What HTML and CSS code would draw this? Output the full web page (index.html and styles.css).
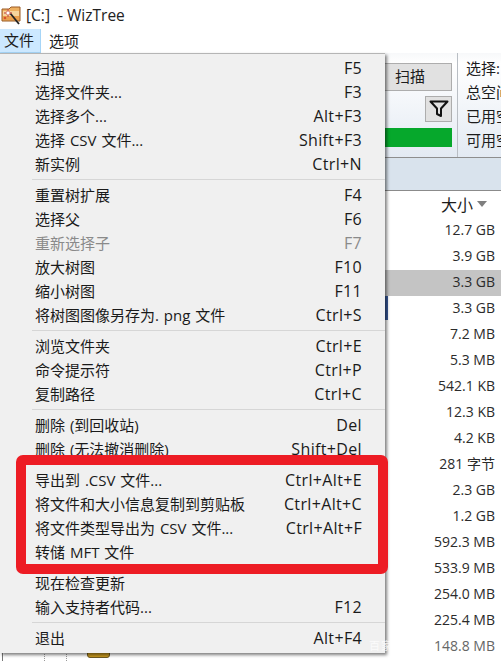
FILE: index.html
```html
<!DOCTYPE html>
<html lang="zh-CN">
<head>
<meta charset="utf-8">
<title>WizTree</title>
<link rel="stylesheet" href="styles.css">
</head>
<body>
<div class="window">
  <header class="titlebar">
    <svg class="app-icon" width="22" height="22" viewBox="0 0 22 22">
      <path d="M1 5h7l2-2h9v14H1z" fill="#eeb060" stroke="#9a5a24"/>
      <path d="M2 7h16v9H2z" fill="#f6d49c"/>
      <path d="M2 12h16v4H2z" fill="#eba04e"/>
      <path d="M9 9l9 11" stroke="#222" stroke-width="1.800"/>
      <path d="M7 5l1 3 3 1-3 1-1 3-1-3-3-1 3-1z" fill="#fff" stroke="#c0392b" stroke-width=".6"/>
      <circle cx="4" cy="14" r="1.300" fill="#d9502e"/>
    </svg>
    <span class="title-text">[C:]&nbsp; - WizTree</span>
  </header>
  <nav class="menubar">
    <span class="menubar-item is-open">文件</span>
    <span class="menubar-item">选项</span>
  </nav>
  <section class="toolbar">
    <div class="toolbar-spacer"></div>
    <div class="scan-panel">
      <button class="scan-btn">扫描</button>
      <div class="filter-row">
        <span class="filter-btn">
          <svg width="20" height="20" viewBox="0 0 20 20"><path d="M1.500 2.500h17l-6.500 7v7.500l-4-2v-5.500z" fill="none" stroke="#111" stroke-width="2" stroke-linejoin="round"/></svg>
        </span>
      </div>
      <div class="usage-bar"></div>
    </div>
    <div class="info-panel">
      <div>选择:</div>
      <div>总空间</div>
      <div>已用空</div>
      <div>可用空</div>
    </div>
  </section>
  <div class="band"></div>
  <section class="list">
    <div class="list-head"><span>大小</span><i class="sort-arrow"></i></div>
    <div class="list-row">12.7 GB</div>
    <div class="list-row">3.9 GB</div>
    <div class="list-row is-selected">3.3 GB</div>
    <div class="list-row is-marked">3.3 GB</div>
    <div class="list-row">7.2 MB</div>
    <div class="list-row">5.3 MB</div>
    <div class="list-row">542.1 KB</div>
    <div class="list-row">12.3 KB</div>
    <div class="list-row">4.2 KB</div>
    <div class="list-row">281 字节</div>
    <div class="list-row">2.3 GB</div>
    <div class="list-row">1.2 GB</div>
    <div class="list-row">592.3 MB</div>
    <div class="list-row">533.9 MB</div>
    <div class="list-row">254.0 MB</div>
    <div class="list-row">225.4 MB</div>
    <div class="list-row">148.8 MB</div>
  </section>
  <div class="tree-bits">
    <i class="tree-line one"></i><i class="tree-line two"></i><i class="tree-line three"></i><i class="folder-tip"></i>
  </div>

  <div class="menu">
    <div class="item"><span>扫描</span><span>F5</span></div>
    <div class="item"><span>选择文件夹...</span><span>F3</span></div>
    <div class="item"><span>选择多个...</span><span>Alt+F3</span></div>
    <div class="item"><span>选择 CSV 文件...</span><span>Shift+F3</span></div>
    <div class="item"><span>新实例</span><span>Ctrl+N</span></div>
    <div class="sep"></div>
    <div class="item"><span>重置树扩展</span><span>F4</span></div>
    <div class="item"><span>选择父</span><span>F6</span></div>
    <div class="item is-disabled"><span>重新选择子</span><span>F7</span></div>
    <div class="item"><span>放大树图</span><span>F10</span></div>
    <div class="item"><span>缩小树图</span><span>F11</span></div>
    <div class="item"><span>将树图图像另存为. png 文件</span><span>Ctrl+S</span></div>
    <div class="sep"></div>
    <div class="item"><span>浏览文件夹</span><span>Ctrl+E</span></div>
    <div class="item"><span>命令提示符</span><span>Ctrl+P</span></div>
    <div class="item"><span>复制路径</span><span>Ctrl+C</span></div>
    <div class="sep"></div>
    <div class="item"><span>删除 (到回收站)</span><span>Del</span></div>
    <div class="item"><span>删除 (无法撤消删除)</span><span>Shift+Del</span></div>
    <div class="sep"></div>
    <div class="item"><span>导出到 .CSV 文件...</span><span>Ctrl+Alt+E</span></div>
    <div class="item"><span>将文件和大小信息复制到剪贴板</span><span>Ctrl+Alt+C</span></div>
    <div class="item"><span>将文件类型导出为 CSV 文件...</span><span>Ctrl+Alt+F</span></div>
    <div class="item"><span>转储 MFT 文件</span><span></span></div>
    <div class="sep"></div>
    <div class="item"><span>现在检查更新</span><span></span></div>
    <div class="item"><span>输入支持者代码...</span><span>F12</span></div>
    <div class="sep"></div>
    <div class="item"><span>退出</span><span>Alt+F4</span></div>
  </div>
  <div class="highlight"></div>
  <span class="watermark">百家</span>
</div>
</body>
</html>
```
FILE: styles.css
```css
* { box-sizing: border-box; }
html, body { margin: 0; padding: 0; background: #fff; }
body {
  font-family: "Open Sans", "Noto Sans CJK SC", "Noto Sans", sans-serif;
  font-size: 15px;
  color: #1c1c1c;
}
.window {
  position: relative;
  width: 501px;
  height: 661px;
  overflow: hidden;
  background: #fff;
}
.titlebar {
  height: 29px;
  display: flex;
  align-items: center;
  gap: 3px;
  padding-left: 1px;
}
.app-icon { flex: none; }
.title-text { font-size: 15.500px; color: #222; }
.menubar {
  height: 24px;
  display: flex;
  align-items: stretch;
}
.menubar-item {
  display: flex;
  align-items: center;
  padding: 0 4px 2px;
  margin-right: 4px;
}
.menubar-item.is-open {
  width: 41px;
  background: #cce8ff;
  border: 1px solid #a6d5f7;
  border-left: 0;
  border-top: 0;
}
.toolbar {
  height: 105px;
  display: flex;
  background: linear-gradient(#f7f8fa, #ffffff 10%, #e3eaf3 100%);
  border-bottom: 1px solid #8e8e8e;
}
.toolbar-spacer { width: 385px; flex: none; }
.scan-panel {
  width: 73px;
  flex: none;
  border-right: 1px solid #b9bec4;
  padding-top: 10px;
}
.scan-btn {
  display: block;
  width: 67px;
  height: 28px;
  padding: 0 16px 3px 0;
  background: #e1e1e1;
  border: 1px solid #adadad;
  border-left: 0;
  font: inherit;
  font-size: 15px;
  color: #1c1c1c;
}
.filter-row {
  display: flex;
  padding: 5px 0 0 40px;
}
.filter-btn {
  width: 27px;
  height: 26px;
  display: flex;
  align-items: center;
  justify-content: center;
  background: #e1e1e1;
  border: 1px solid #adadad;
}
.usage-bar {
  width: 67px;
  height: 19px;
  margin-top: 6px;
  background: #06a82c;
}
.info-panel {
  padding: 3px 0 0 8px;
  line-height: 24px;
  white-space: nowrap;
  overflow: hidden;
}
.band {
  height: 33px;
  background: #d9e3ed;
  border-bottom: 1px solid #8b8b8b;
}
.list { padding: 1px 0 0; }
.list-head {
  height: 26px;
  display: flex;
  align-items: center;
  justify-content: flex-end;
  gap: 4px;
  padding: 0 14px 2px 0;
  font-size: 16px;
}
.sort-arrow {
  width: 0;
  height: 0;
  border-left: 5.500px solid transparent;
  border-right: 5.500px solid transparent;
  border-top: 6px solid #7f7f7f;
}
.list-row {
  height: 26px;
  padding: 0 6px 2px 0;
  line-height: 24px;
  text-align: right;
  font-size: 14px;
  color: #2b2b2b;
  position: relative;
}
.list-row.is-selected { background: #c4c4c4; }
.list-row.is-marked::before {
  content: "";
  position: absolute;
  left: 385px;
  top: 0;
  width: 3px;
  height: 24px;
  background: #3a5a9a;
}
.list-row:last-child { color: #666; }
.tree-bits { position: absolute; inset: 0; pointer-events: none; }
.tree-line {
  position: absolute;
  top: 652px;
  height: 9px;
  width: 0;
}
.tree-line.one { left: 2px; border-left: 1px solid #777; }
.tree-line.two { left: 44px; border-left: 1px dotted #999; }
.tree-line.three { left: 66px; border-left: 1px dotted #999; }
.folder-tip {
  position: absolute;
  left: 87px;
  top: 648px;
  width: 23px;
  height: 10px;
  background: #c8991f;
  border: 1px solid #6e5a22;
  border-radius: 0 0 3px 3px;
}
.menu {
  position: absolute;
  left: 0;
  top: 53px;
  width: 385px;
  height: 600px;
  padding: 2px 0 3px;
  background: #f0f0f0;
  border-top: 1px solid #b5b5b5;
  box-shadow: 2px 2px 3px rgba(0, 0, 0, .5);
}
.item {
  height: 24px;
  display: flex;
  align-items: center;
  justify-content: space-between;
  padding: 0 23px 2px 35px;
  white-space: nowrap;
  word-spacing: 1px;
  color: #1a1a1a;
}
.item span:last-child {
  margin-top: 2px;
  font-size: 16px;
  letter-spacing: .35px;
}
.item span:first-child {
  margin-top: 0;
  font-size: 15px;
  letter-spacing: 0;
}
.item.is-disabled { color: #8a8a8a; }
.sep {
  height: 7px;
  margin-left: 32px;
  background: linear-gradient(#d6d6d6, #d6d6d6) center / 100% 1px no-repeat;
}
.highlight {
  position: absolute;
  left: 16px;
  top: 455px;
  width: 372px;
  height: 119px;
  border: 10px solid #ed1c24;
  border-radius: 7px;
}
.watermark {
  position: absolute;
  left: 369px;
  top: 637px;
  font-size: 11px;
  letter-spacing: 1px;
  color: rgba(255, 255, 255, .75);
}
```
